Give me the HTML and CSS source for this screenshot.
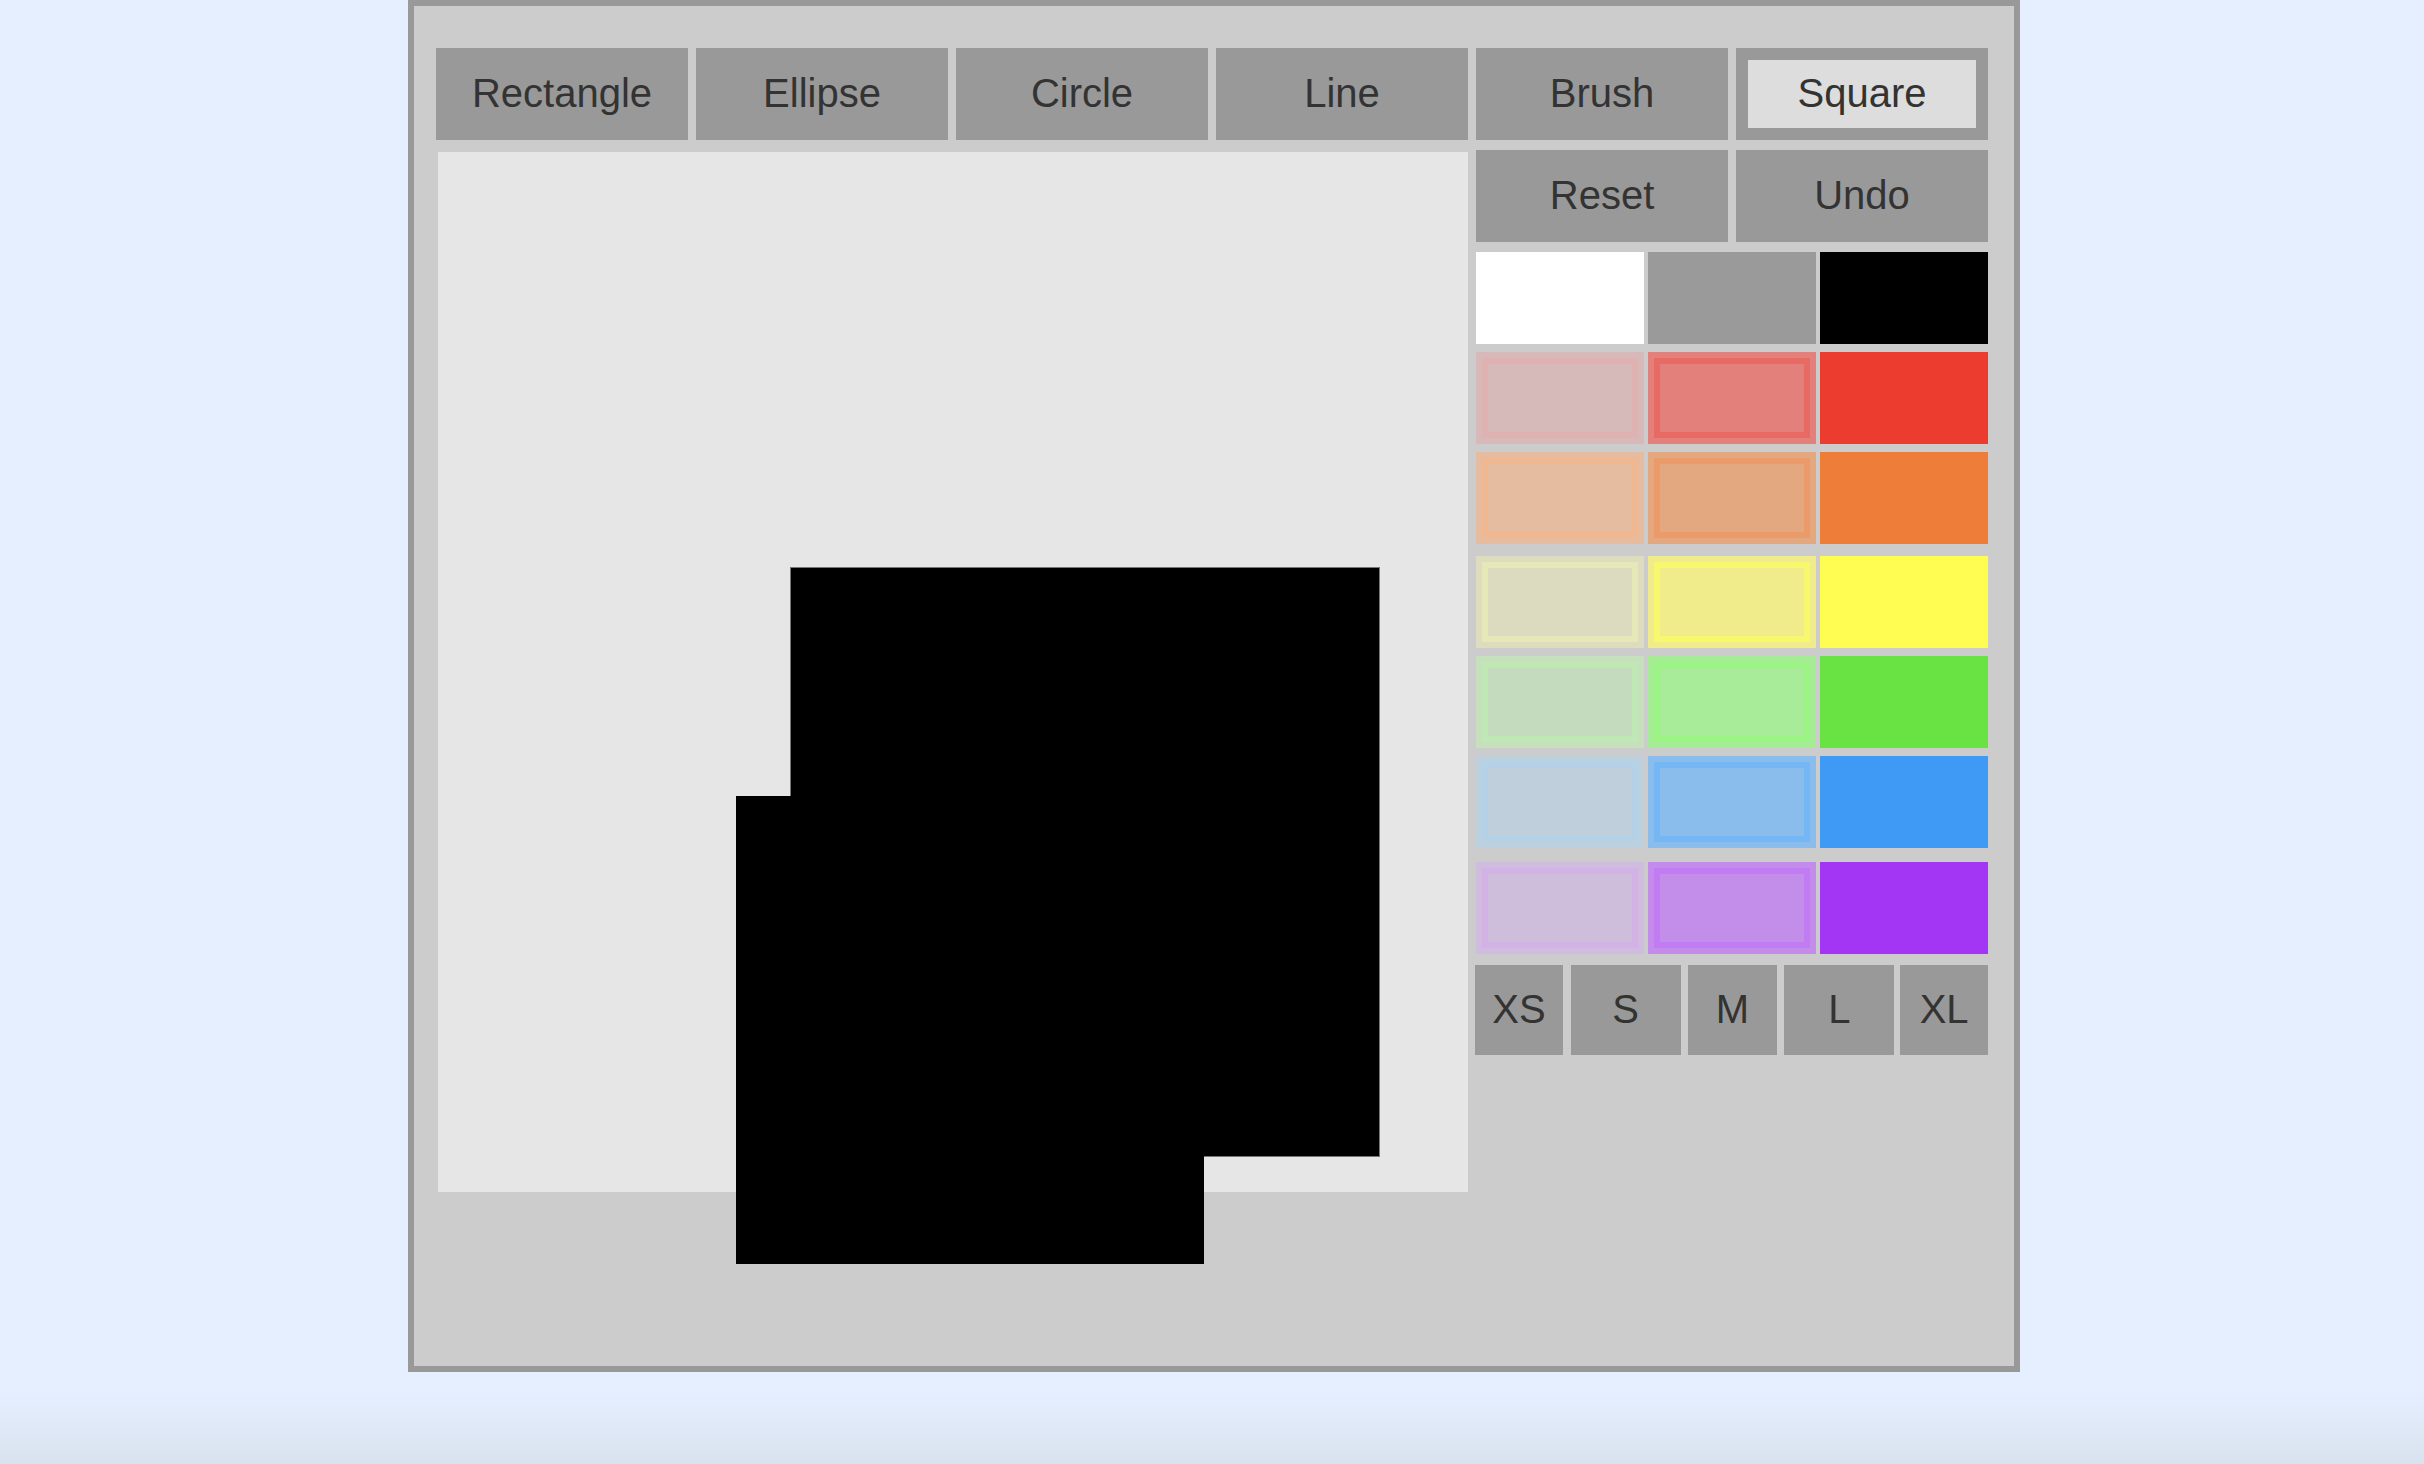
FILE: index.html
```html
<!DOCTYPE html>
<html>
<head>
<meta charset="utf-8">
<title>Paint</title>
<link rel="stylesheet" href="styles.css">
</head>
<body>
<div class="app">
  <div class="toolbar">
    <button class="btn">Rectangle</button>
    <button class="btn">Ellipse</button>
    <button class="btn">Circle</button>
    <button class="btn">Line</button>
    <button class="btn">Brush</button>
    <button class="btn selected">Square</button>
  </div>
  <div class="main">
    <div class="canvas">
      <div class="shape shape-a"></div>
      <div class="shape shape-b"></div>
    </div>
    <div class="panel">
      <div class="actions">
        <button class="btn">Reset</button>
        <button class="btn">Undo</button>
      </div>
      <div class="swatch-row r1">
        <div class="swatch white"></div>
        <div class="swatch gray"></div>
        <div class="swatch black"></div>
      </div>
      <div class="swatch-row r2">
        <div class="swatch red1"><div class="sw-in"></div></div>
        <div class="swatch red2"><div class="sw-in"></div></div>
        <div class="swatch red3"></div>
      </div>
      <div class="swatch-row r3">
        <div class="swatch orange1"><div class="sw-in"></div></div>
        <div class="swatch orange2"><div class="sw-in"></div></div>
        <div class="swatch orange3"></div>
      </div>
      <div class="swatch-row r4">
        <div class="swatch yellow1"><div class="sw-in"></div></div>
        <div class="swatch yellow2"><div class="sw-in"></div></div>
        <div class="swatch yellow3"></div>
      </div>
      <div class="swatch-row r5">
        <div class="swatch green1"><div class="sw-in"></div></div>
        <div class="swatch green2"><div class="sw-in"></div></div>
        <div class="swatch green3"></div>
      </div>
      <div class="swatch-row r6">
        <div class="swatch blue1"><div class="sw-in"></div></div>
        <div class="swatch blue2"><div class="sw-in"></div></div>
        <div class="swatch blue3"></div>
      </div>
      <div class="swatch-row r7">
        <div class="swatch purple1"><div class="sw-in"></div></div>
        <div class="swatch purple2"><div class="sw-in"></div></div>
        <div class="swatch purple3"></div>
      </div>
      <div class="sizes">
        <button class="btn size xs">XS</button>
        <button class="btn size s">S</button>
        <button class="btn size m">M</button>
        <button class="btn size l">L</button>
        <button class="btn size xl">XL</button>
      </div>
    </div>
  </div>
</div>
</body>
</html>
```
FILE: styles.css
```css
html, body {
  margin: 0;
  padding: 0;
}
body {
  width: 2424px;
  height: 1464px;
  overflow: hidden;
  background: linear-gradient(to bottom, #e6efff 0px, #e6efff 1390px, #d9e3ef 1464px);
  font-family: "Liberation Sans", Arial, sans-serif;
}
.app {
  box-sizing: border-box;
  width: 1612px;
  height: 1372px;
  margin-left: 408px;
  border: 6px solid #999;
  background: #ccc;
  padding: 42px 0 0 22px;
}
.btn {
  box-sizing: border-box;
  display: flex;
  align-items: center;
  justify-content: center;
  width: 252px;
  height: 92px;
  margin: 0;
  padding: 0 0 2px 0;
  border: none;
  background: #999;
  color: #333;
  font-family: "Liberation Sans", Arial, sans-serif;
  font-size: 40px;
  line-height: 1;
}
.btn.selected {
  border: 12px solid #999;
  background: #ddd;
}
.toolbar {
  display: flex;
  gap: 8px;
}
.main {
  display: flex;
  align-items: flex-start;
  margin-top: 10px;
}
.canvas {
  position: relative;
  width: 1030px;
  height: 1040px;
  margin-top: 2px;
  margin-left: 2px;
  background: #e6e6e6;
}
.shape {
  position: absolute;
  background: #000;
  box-sizing: border-box;
}
.shape-a {
  left: 352px;
  top: 415px;
  width: 590px;
  height: 590px;
  border: 1px solid #777;
}
.shape-b {
  left: 298px;
  top: 644px;
  width: 468px;
  height: 468px;
}
.panel {
  width: 512px;
  margin-left: 8px;
}
.actions {
  display: flex;
  gap: 8px;
}
.swatch-row {
  display: flex;
  gap: 4px;
}
.r1 { margin-top: 10px; }
.r2 { margin-top: 8px; }
.r3 { margin-top: 8px; }
.r4 { margin-top: 12px; }
.r5 { margin-top: 8px; }
.r6 { margin-top: 8px; }
.r7 { margin-top: 14px; }
.swatch {
  box-sizing: border-box;
  width: 168px;
  height: 92px;
  padding: 6px;
}
.sw-in {
  box-sizing: border-box;
  width: 100%;
  height: 100%;
  border: 6px solid transparent;
}
.white { background: #fff; }
.gray { background: #9a9a9a; }
.black { background: #000; }

.red1 { background: #d7b9b9; }
.red1 .sw-in { background: #d6baba; border-color: #dfb1b1; }
.red2 { background: #e3807c; }
.red2 .sw-in { background: #e3807c; border-color: #e76a63; }
.red3 { background: #eb3c2f; }

.orange1 { background: #e5bca0; }
.orange1 .sw-in { background: #e5bca0; border-color: #f0b890; }
.orange2 { background: #e3a880; }
.orange2 .sw-in { background: #e3a880; border-color: #eb9b69; }
.orange3 { background: #ee7d3a; }

.yellow1 { background: #dddcbe; }
.yellow1 .sw-in { background: #dcdbc0; border-color: #e6e8b7; }
.yellow2 { background: #f0ec8c; }
.yellow2 .sw-in { background: #f0ec8c; border-color: #f8f86e; }
.yellow3 { background: #fffd52; }

.green1 { background: #c6dfbd; }
.green1 .sw-in { background: #c4dbbd; border-color: #bfe8b5; }
.green2 { background: #a6ec96; }
.green2 .sw-in { background: #a8eb98; border-color: #9cf485; }
.green3 { background: #69e244; }

.blue1 { background: #bdd0de; }
.blue1 .sw-in { background: #bfcfdc; border-color: #b5d1e8; }
.blue2 { background: #8abdec; }
.blue2 .sw-in { background: #8abcec; border-color: #74b7f4; }
.blue3 { background: #3e9af5; }

.purple1 { background: #d0bcdf; }
.purple1 .sw-in { background: #cebedb; border-color: #d3b3e6; }
.purple2 { background: #c38ceb; }
.purple2 .sw-in { background: #c28eea; border-color: #c27cf3; }
.purple3 { background: #a335f5; }

.sizes {
  display: flex;
  margin-top: 11px;
  margin-left: -1px;
}
.size {
  height: 90px;
}
.xs { width: 88px; }
.s { width: 110px; margin-left: 8px; }
.m { width: 90px; margin-left: 7px; }
.l { width: 110px; margin-left: 7px; }
.xl { width: 88px; margin-left: 6px; }
```
